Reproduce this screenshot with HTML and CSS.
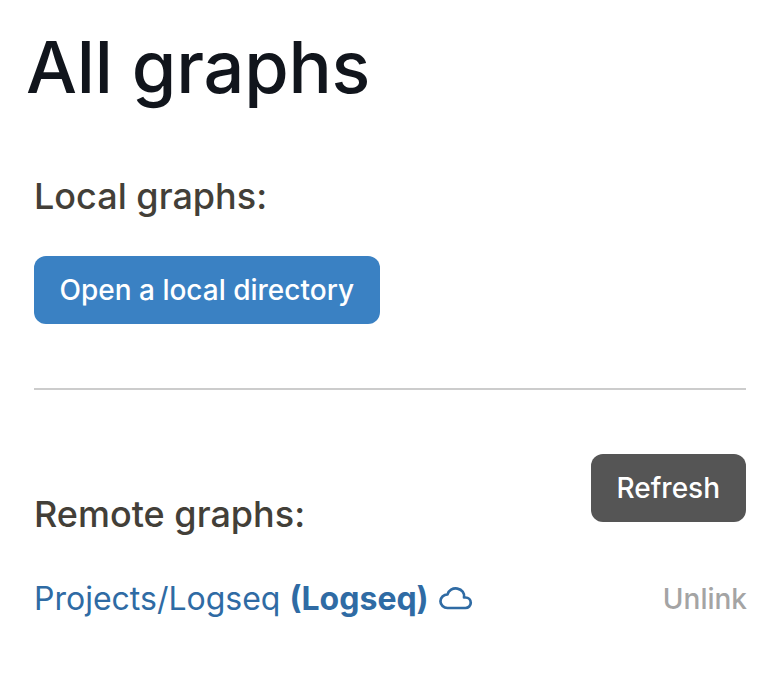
FILE: index.html
```html
<!DOCTYPE html>
<html lang="en">
<head>
    <meta charset="UTF-8">
    <title>All graphs</title>
    <link rel="stylesheet" href="styles.css">
</head>
<body>
    <div class="container">
        <h1 class="title">All graphs</h1>
        <div class="local">
            <h2 class="section-title">Local graphs:</h2>
            <button class="btn btn-primary">Open a local directory</button>
        </div>
        <hr class="divider">
        <div class="remote-head">
            <h2 class="section-title">Remote graphs:</h2>
            <button class="btn btn-dark">Refresh</button>
        </div>
        <div class="graph-row">
            <a class="graph-link" href="#">
                <span>Projects/Logseq <b>(Logseq)</b></span>
                <svg class="cloud" viewBox="0 0 24 24" width="36" height="36" fill="none" stroke="currentColor" stroke-width="1.8" stroke-linecap="round" stroke-linejoin="round">
                    <path d="M7 18a4.6 4.4 0 0 1 0 -9a5 4.5 0 0 1 11 2h1a3.5 3.5 0 0 1 0 7h-12"/>
                </svg>
            </a>
            <a class="unlink" href="#">Unlink</a>
        </div>
    </div>
</body>
</html>
```

FILE: styles.css
```css
* {
    margin: 0;
    padding: 0;
    box-sizing: border-box;
    font-family: Inter, sans-serif;
}

body {
    background: #fff;
}

.container {
    padding: 23px 38px 0 34px;
}

.title {
    font-size: 72px;
    font-weight: 500;
    line-height: 88px;
    color: #11151c;
    margin-left: -8px;
    letter-spacing: -0.2px;
}

.local {
    margin-top: 61px;
}

.section-title {
    font-size: 36px;
    font-weight: 500;
    line-height: 48px;
    color: #433f38;
}

.btn {
    border: none;
    border-radius: 12px;
    height: 68px;
    padding: 0 26px;
    color: #fff;
    font-size: 28px;
    font-weight: 500;
}

.btn-primary {
    background: #3a81c3;
    margin-top: 36px;
    padding: 0 25.5px;
}

.btn-dark {
    background: #555;
}

.divider {
    border: none;
    border-top: 2px solid #ccc;
    margin-top: 64px;
}

.remote-head {
    display: flex;
    justify-content: space-between;
    align-items: flex-start;
    margin-top: 64px;
}

.remote-head .section-title {
    margin-top: 36px;
}

.graph-row {
    display: flex;
    justify-content: space-between;
    align-items: center;
    margin-top: 41px;
}

.graph-link {
    display: flex;
    align-items: center;
    gap: 8px;
    font-size: 32px;
    color: #2f6ba4;
    text-decoration: none;
}

.graph-link b {
    font-weight: 700;
}

.unlink {
    font-size: 28px;
    font-weight: 500;
    color: #a4a4a4;
    text-decoration: none;
    margin-right: -1px;
}
```
